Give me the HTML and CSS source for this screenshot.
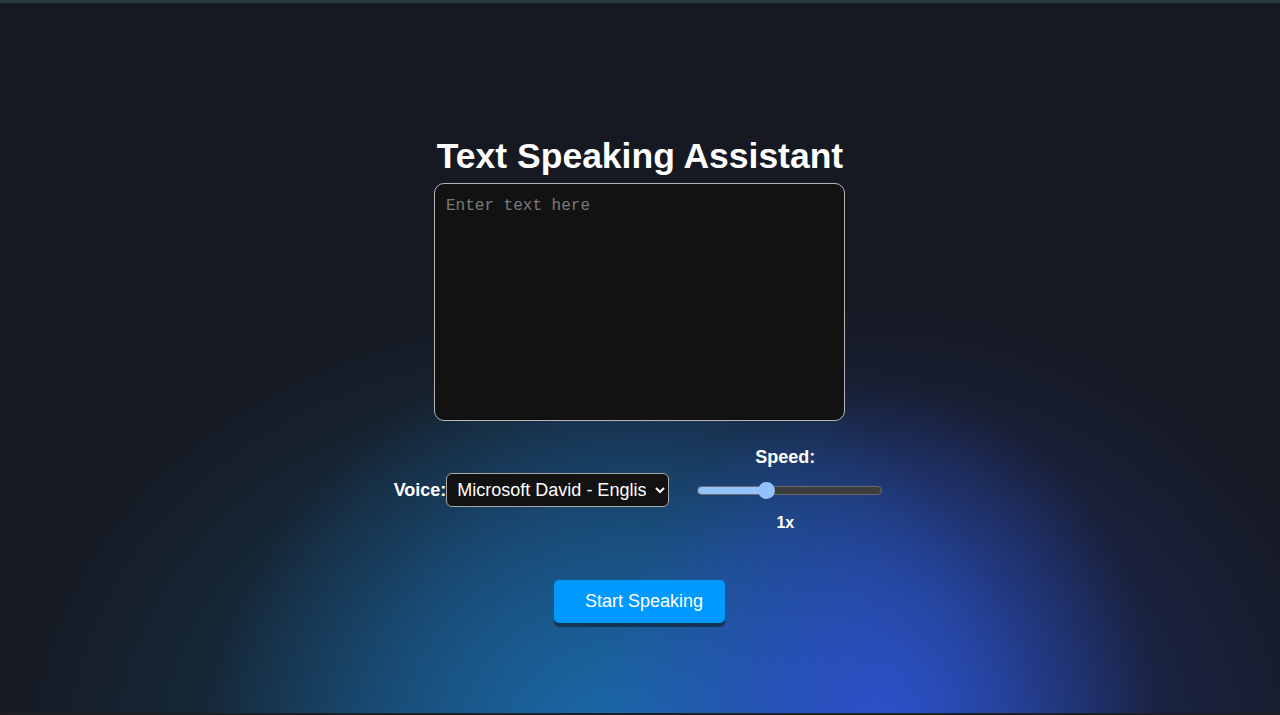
FILE: index.html
```html
<!DOCTYPE html>
<html lang="en">
<head>
<meta charset="utf-8">
<title>Text Speaking Assistant</title>
<link rel="stylesheet" href="styles.css">
</head>
<body>
<div class="topbar"></div>
<main class="app">
  <h1 class="title">Text Speaking Assistant</h1>
  <textarea class="text-input" placeholder="Enter text here"></textarea>
  <div class="controls">
    <div class="voice-group">
      <label class="ctrl-label" for="voice">Voice:</label>
      <select id="voice" class="voice-select">
        <option>Microsoft David - English (United States)</option>
      </select>
    </div>
    <div class="speed-group">
      <label class="ctrl-label speed-label" for="speed">Speed:</label>
      <input id="speed" class="speed-range" type="range" min="0.1" max="2.6" step="0.1" value="1" style="--fill: 36.8%">
      <span class="speed-value">1x</span>
    </div>
  </div>
  <button class="speak-btn" type="button">Start Speaking</button>
</main>
</body>
</html>
```

FILE: styles.css
```css
html, body {
  margin: 0;
  padding: 0;
  height: 100%;
}

body {
  color-scheme: dark;
  font-family: "Liberation Sans", Arial, sans-serif;
  color: #ffffff;
  background-color: #161922;
  background-image:
    radial-gradient(ellipse 280px 350px at 880px 735px, rgba(46, 80, 208, 0.95) 0%, rgba(46, 80, 208, 0.55) 45%, rgba(46, 80, 208, 0) 100%),
    radial-gradient(ellipse 410px 400px at 620px 745px, rgba(27, 108, 176, 0.95) 0%, rgba(27, 108, 176, 0.5) 50%, rgba(27, 108, 176, 0) 100%),
    radial-gradient(ellipse 570px 470px at 560px 760px, rgba(22, 66, 90, 0.95) 0%, rgba(22, 62, 88, 0.5) 55%, rgba(22, 62, 88, 0) 100%),
    radial-gradient(ellipse 520px 470px at 860px 760px, rgba(32, 52, 120, 0.85) 0%, rgba(32, 52, 120, 0.4) 55%, rgba(32, 52, 120, 0) 100%);
  background-repeat: no-repeat;
  overflow: hidden;
  display: flex;
  flex-direction: column;
  border-bottom: 2px solid #1d1f22;
  box-sizing: border-box;
}

.topbar {
  height: 3px;
  background: #2b3a44;
  flex: none;
}

.app {
  display: flex;
  flex-direction: column;
  align-items: center;
  padding-top: 133px;
}

.title {
  margin: 0 0 6px;
  font-size: 35.5px;
  line-height: 41px;
  font-weight: bold;
  text-align: center;
}

.text-input {
  width: 411px;
  height: 238px;
  box-sizing: border-box;
  margin-left: -1px;
  background: #121212;
  border: 1px solid #b5b5b5;
  border-radius: 10px;
  padding: 12px 11px;
  color: #e6e6e6;
  font-family: "Liberation Mono", "DejaVu Sans Mono", monospace;
  font-size: 16px;
  line-height: 20px;
  resize: none;
  outline: none;
}

.text-input::placeholder {
  color: #7a7a7a;
}

.controls {
  margin-top: 27px;
  display: flex;
  align-items: center;
  gap: 28px;
  margin-left: -4px;
}

.voice-group {
  display: flex;
  align-items: center;
}

.ctrl-label {
  font-weight: bold;
  font-size: 18px;
  line-height: 18px;
}

.voice-select {
  width: 223px;
  height: 34px;
  box-sizing: border-box;
  background-color: #121212;
  color: #ffffff;
  border: 1px solid #a8a8a8;
  border-radius: 6px;
  padding: 0 6px;
  font-family: "Liberation Sans", Arial, sans-serif;
  font-size: 18px;
}

.speed-group {
  display: flex;
  flex-direction: column;
  align-items: center;
  gap: 16px;
}

.speed-label,
.speed-value {
  margin-right: 9px;
}

.speed-range {
  -webkit-appearance: none;
  appearance: none;
  width: 185px;
  height: 16px;
  margin: 0;
  background: transparent;
  outline: none;
}

.speed-range::-webkit-slider-runnable-track {
  height: 9px;
  box-sizing: border-box;
  border-radius: 5px;
  border: 1px solid #6c6c6c;
  background: linear-gradient(to right, #93c2fb 0, #93c2fb var(--fill), #3d3d3d var(--fill), #3d3d3d 100%);
}

.speed-range::-webkit-slider-thumb {
  -webkit-appearance: none;
  appearance: none;
  width: 17px;
  height: 17px;
  margin-top: -5px;
  border-radius: 50%;
  background: #93c2fb;
  border: none;
}

.speed-value {
  font-weight: bold;
  font-size: 16px;
  line-height: 18px;
}

.speak-btn {
  margin-top: 48px;
  margin-left: -1px;
  width: 171px;
  height: 43px;
  padding: 0 0 0 9px;
  background: #0099ff;
  color: #ffffff;
  border: none;
  border-radius: 5px;
  font-family: "Liberation Sans", Arial, sans-serif;
  font-size: 18px;
  box-shadow: 0 4px 0 #163454;
  cursor: pointer;
}
```
